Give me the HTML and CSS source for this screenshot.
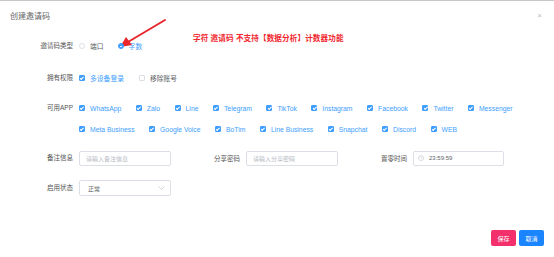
FILE: index.html
```html
<!DOCTYPE html>
<html lang="zh-CN">
<head>
  <meta charset="UTF-8">
  <title>创建邀请码</title>
  <link rel="stylesheet" href="styles.css">
</head>
<body>
  <div class="dialog">
    <div class="dialog-header">
      <span class="dialog-title">创建邀请码</span>
      <span class="dialog-close">×</span>
    </div>

    <!-- annotation over the screenshot -->
    <div class="note">字符 邀请码 不支持【数据分析】计数器功能</div>
    <svg class="arrow" width="50" height="32" viewBox="0 0 50 32">
      <line x1="48" y1="2" x2="11" y2="24" stroke="#e8262b" stroke-width="2" stroke-linecap="round"/>
      <polygon points="3,29 9,19 15,27" fill="#e8262b"/>
    </svg>

    <div class="form">
      <div class="row row-type">
        <div class="label">邀请码类型</div>
        <div class="controls">
          <label class="opt"><span class="radio"></span><span class="opt-text">端口</span></label>
          <label class="opt active"><span class="radio checked"></span><span class="opt-text">字数</span></label>
        </div>
      </div>

      <div class="row row-perm">
        <div class="label">拥有权限</div>
        <div class="controls">
          <label class="opt active"><span class="cb checked"></span><span class="opt-text">多设备登录</span></label>
          <label class="opt"><span class="cb"></span><span class="opt-text">移除账号</span></label>
        </div>
      </div>

      <div class="row row-apps">
        <div class="label">可用APP</div>
        <div class="controls apps">
          <label class="opt active"><span class="cb checked"></span><span class="opt-text">WhatsApp</span></label>
          <label class="opt active"><span class="cb checked"></span><span class="opt-text">Zalo</span></label>
          <label class="opt active"><span class="cb checked"></span><span class="opt-text">Line</span></label>
          <label class="opt active"><span class="cb checked"></span><span class="opt-text">Telegram</span></label>
          <label class="opt active"><span class="cb checked"></span><span class="opt-text">TikTok</span></label>
          <label class="opt active"><span class="cb checked"></span><span class="opt-text">Instagram</span></label>
          <label class="opt active"><span class="cb checked"></span><span class="opt-text">Facebook</span></label>
          <label class="opt active"><span class="cb checked"></span><span class="opt-text">Twitter</span></label>
          <label class="opt active"><span class="cb checked"></span><span class="opt-text">Messenger</span></label>
          <label class="opt active"><span class="cb checked"></span><span class="opt-text">Meta Business</span></label>
          <label class="opt active"><span class="cb checked"></span><span class="opt-text">Google Voice</span></label>
          <label class="opt active"><span class="cb checked"></span><span class="opt-text">BoTim</span></label>
          <label class="opt active"><span class="cb checked"></span><span class="opt-text">Line Business</span></label>
          <label class="opt active"><span class="cb checked"></span><span class="opt-text">Snapchat</span></label>
          <label class="opt active"><span class="cb checked"></span><span class="opt-text">Discord</span></label>
          <label class="opt active"><span class="cb checked"></span><span class="opt-text">WEB</span></label>
        </div>
      </div>

      <div class="row row-inputs">
        <div class="label">备注信息</div>
        <div class="controls">
          <div class="input"><span class="placeholder">请输入备注信息</span></div>
          <div class="sub-label">分享密码</div>
          <div class="input"><span class="placeholder">请输入分享密码</span></div>
          <div class="sub-label">置零时间</div>
          <div class="input time">
            <svg class="clock" width="6" height="6" viewBox="0 0 12 12">
              <circle cx="6" cy="6" r="5" fill="none" stroke="#c0c4cc" stroke-width="1.2"/>
              <path d="M6 3 V6 H8.5" fill="none" stroke="#c0c4cc" stroke-width="1.2"/>
            </svg>
            <span class="value">23:59:59</span>
          </div>
        </div>
      </div>

      <div class="row row-status">
        <div class="label">启用状态</div>
        <div class="controls">
          <div class="input select">
            <span class="value">正常</span>
            <svg class="chevron" width="7" height="4" viewBox="0 0 14 8">
              <path d="M1 1 L7 7 L13 1" fill="none" stroke="#c0c4cc" stroke-width="1.4"/>
            </svg>
          </div>
        </div>
      </div>
    </div>

    <div class="dialog-footer">
      <button class="btn btn-save">保存</button>
      <button class="btn btn-cancel">取消</button>
    </div>
  </div>
</body>
</html>
```

FILE: styles.css
```css
body {
  margin: 0;
  background: #fff;
  font-family: "Liberation Sans", "Noto Sans CJK SC", sans-serif;
  color: #606266;
}
.dialog {
  position: relative;
  width: 554px;
  height: 256px;
  border-top: 1px solid #c6c6c6;
  box-sizing: border-box;
}
.dialog-header {
  display: flex;
  justify-content: space-between;
  align-items: center;
  height: 29px;
  padding: 0 10px 0 10px;
}
.dialog-title {
  font-size: 8px;
  color: #666;
}
.dialog-close {
  font-size: 8px;
  color: #b8b8b8;
  margin-right: 2px;
}
.note {
  position: absolute;
  left: 193px;
  top: 31px;
  font-size: 7.6px;
  font-weight: bold;
  color: #f0262e;
  white-space: nowrap;
  letter-spacing: 0.1px;
}
.arrow {
  position: absolute;
  left: 117px;
  top: 17px;
}
.form {
  padding-top: 8px;
}
.row {
  display: flex;
  align-items: flex-start;
}
.label {
  width: 73px;
  height: 16px;
  line-height: 16px;
  text-align: right;
  font-size: 6.5px;
  color: #555;
  flex-shrink: 0;
  white-space: nowrap;
}
.controls {
  display: flex;
  align-items: center;
  margin-left: 6px;
  min-height: 16px;
}
.row-perm {
  margin-top: 16px;
}
.row-apps {
  margin-top: 14px;
}
.row-inputs {
  margin-top: 13px;
}
.row-status {
  margin-top: 14px;
}
.opt {
  display: flex;
  align-items: center;
  height: 16px;
  margin-right: 15px;
  font-size: 6.8px;
  color: #606266;
  white-space: nowrap;
}
.opt.active {
  color: #409eff;
}
.opt-text {
  margin-left: 5px;
}
.row-type .opt {
  margin-right: 14px;
}
.apps {
  flex-wrap: wrap;
  width: 462px;
  row-gap: 5px;
}
.apps .opt {
  margin-right: 14.5px;
}
.cb {
  display: inline-block;
  position: relative;
  width: 6px;
  height: 6px;
  border: 1px solid #dcdfe6;
  border-radius: 1px;
  box-sizing: border-box;
  background: #fff;
}
.cb.checked {
  background: #409eff;
  border-color: #409eff;
}
.cb.checked::after {
  content: "";
  position: absolute;
  left: 1.3px;
  top: 0.2px;
  width: 1.2px;
  height: 2.6px;
  border: solid #fff;
  border-width: 0 0.8px 0.8px 0;
  transform: rotate(45deg);
}
.radio {
  display: inline-block;
  position: relative;
  width: 6px;
  height: 6px;
  border: 1px solid #dcdfe6;
  border-radius: 50%;
  box-sizing: border-box;
}
.radio.checked {
  background: #409eff;
  border-color: #409eff;
}
.radio.checked::after {
  content: "";
  position: absolute;
  left: 1.5px;
  top: 1.5px;
  width: 1.6px;
  height: 1.6px;
  border-radius: 50%;
  background: #fff;
}
.input {
  display: flex;
  align-items: center;
  width: 92px;
  height: 15px;
  border: 1px solid #dcdfe6;
  border-radius: 2px;
  box-sizing: border-box;
  padding: 0 6px;
  font-size: 6px;
}
.placeholder {
  color: #b4b8bf;
}
.value {
  color: #606266;
}
.sub-label {
  width: 69px;
  margin-right: 6px;
  text-align: right;
  font-size: 6.5px;
  color: #555;
  white-space: nowrap;
}
.time {
  width: 91px;
  padding-left: 4px;
}
.clock {
  margin-right: 5px;
}
.select {
  justify-content: space-between;
  height: 16px;
  padding: 0 5px 0 8px;
}
.dialog-footer {
  display: flex;
  justify-content: flex-end;
  gap: 3px;
  padding: 34px 10px 0 0;
}
.btn {
  width: 25px;
  height: 16px;
  border: none;
  border-radius: 2px;
  padding: 0;
  font-family: inherit;
  font-size: 6px;
  color: #fff;
}
.btn-save {
  background: #f4306c;
}
.btn-cancel {
  background: #1b84ff;
}
```
